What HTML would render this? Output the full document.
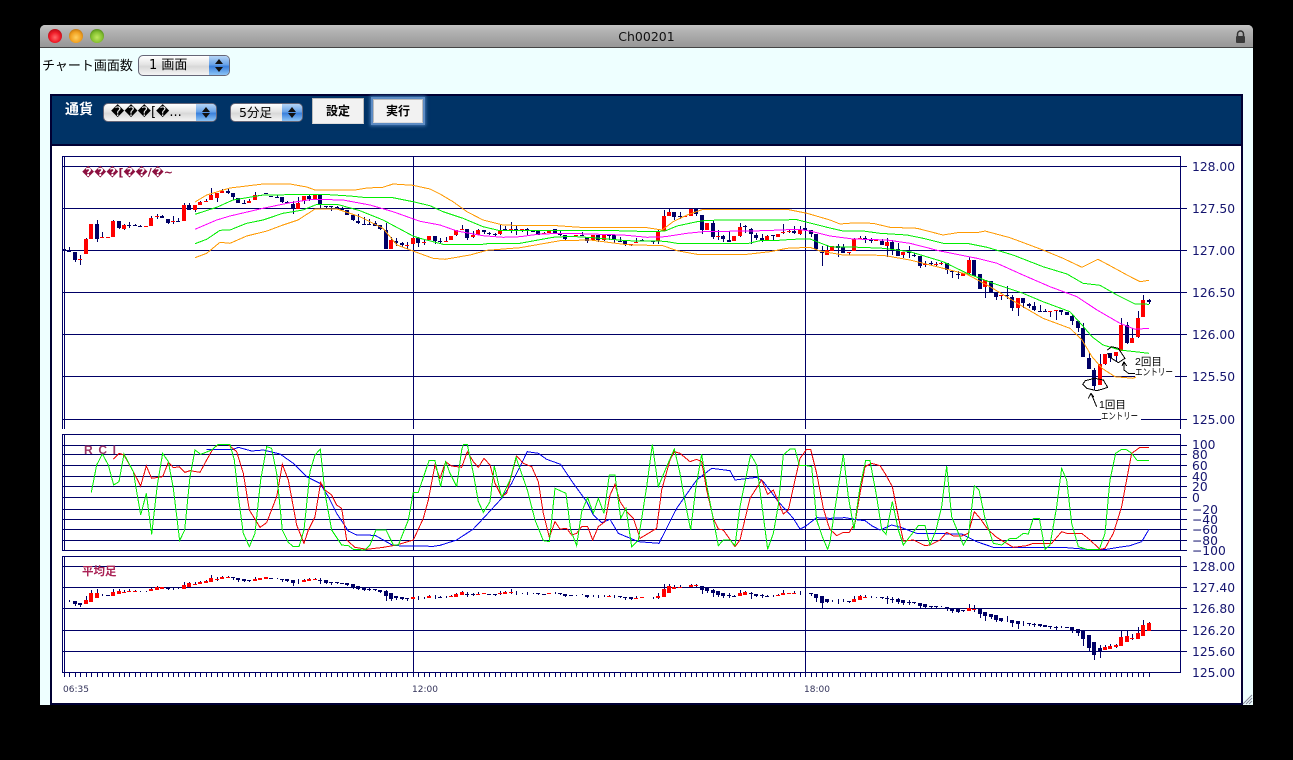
<!DOCTYPE html>
<html><head><meta charset="utf-8"><title>Ch00201</title>
<style>
html,body{margin:0;padding:0;background:#000;width:1293px;height:760px;overflow:hidden}
#win{position:absolute;left:40px;top:25px;width:1213px;height:680px;background:#eeffff;border-radius:5px 5px 0 0;overflow:hidden}
#bar{position:absolute;left:0;top:0;width:1213px;height:22px;background:linear-gradient(#c4c4c4,#b4b4b4 25%,#9c9c9c 85%,#989898);border-bottom:1px solid #444}
#ttl{position:absolute;left:0;top:4px;width:1213px;text-align:center;font:12.5px "DejaVu Sans",sans-serif;color:#111}
.tl{position:absolute;top:4px;width:14px;height:14px;border-radius:50%;border:0}
.lab{position:absolute;font-family:"Liberation Sans","Noto Sans CJK JP",sans-serif;white-space:nowrap}
.sel{position:absolute;box-sizing:border-box;border:1px solid #667;border-radius:5px;background:linear-gradient(#fff,#e4e4e4 45%,#d8d8d8 55%,#f4f4f4);overflow:hidden}
.sel span.t{position:absolute;top:1px;font:13px/18px "DejaVu Sans","Noto Sans CJK JP",sans-serif;color:#000;white-space:nowrap}
.sel i{position:absolute;right:0;top:0;bottom:0;width:20px;background:linear-gradient(#b4d4f6,#6aa4e8 45%,#3a80dc 55%,#8cc4f6)}
.sel i:before,.sel i:after{content:"";position:absolute;left:6px;border-left:4px solid transparent;border-right:4px solid transparent}
.sel i:before{top:3px;border-bottom:5px solid #111}
.sel i:after{bottom:3px;border-top:5px solid #111}
#panel{position:absolute;left:50px;top:94px;width:1193px;height:611px;background:#000033}
#head{position:absolute;left:2px;top:2px;width:1189px;height:48px;background:#003366}
#white{position:absolute;left:2px;top:52px;width:1189px;height:557px;background:#fff}
.btn{position:absolute;box-sizing:border-box;background:#f2f2f2;border:1px solid #bbb;border-bottom-color:#ddd;text-align:center;font:bold 12px "Liberation Sans","Noto Sans CJK JP",sans-serif;color:#000}
svg{position:absolute;left:0;top:0}
</style></head>
<body>
<div id="win">
 <div id="bar">
  <div class="tl" style="left:8px;background:radial-gradient(circle at 50% 60%,#ff6a6a,#f01c28 45%,#b00c16 80%,#6a1018)"></div>
  <div class="tl" style="left:29px;background:radial-gradient(circle at 50% 60%,#ffd060,#f0a020 50%,#b87010 82%,#7a5a20)"></div>
  <div class="tl" style="left:50px;background:radial-gradient(circle at 50% 60%,#c0e860,#84c030 50%,#4c8418 82%,#4a6a28)"></div>
  <div id="ttl">Ch00201</div>
  <svg width="14" height="14" style="left:1194px;top:5px"><path d="M3.5 6V4a3 3 0 0 1 6 0v2" fill="none" stroke="#333" stroke-width="1.5"/><rect x="2" y="6" width="9" height="7" rx="1" fill="#3a3a3a"/></svg>
 </div>
</div>
<div class="lab" style="left:42px;top:57px;font-size:13px;line-height:18px;color:#000">チャート画面数</div>
<div class="sel" style="left:138px;top:55px;width:92px;height:21px"><span class="t" style="left:10px">1 画面</span><i></i></div>
<div id="panel"><div id="head"></div><div id="white"></div></div>
<div class="lab" style="left:65px;top:100px;font-size:14px;font-weight:bold;line-height:18px;color:#fff">通貨</div>
<div class="sel" style="left:103px;top:103px;width:114px;height:19px"><span class="t" style="left:7px;top:0">���[�...</span><i></i></div>
<div class="sel" style="left:230px;top:103px;width:73px;height:19px"><span class="t" style="left:8px;top:0;font-size:12.5px">5分足</span><i></i></div>
<div class="btn" style="left:312px;top:98px;width:52px;height:26px;line-height:25px">設定</div>
<div class="btn" style="left:373px;top:99px;width:50px;height:24px;line-height:23px;box-shadow:0 0 0 2px #5d8cc4,0 0 3px 3px #3f73ad">実行</div>

<svg width="1293" height="760" xmlns="http://www.w3.org/2000/svg">
 <g shape-rendering="crispEdges" fill="none" stroke="#000066" stroke-width="1">
  <path d="M62 156.5H1181M62 166.5H1187M62 208.5H1187M62 250.5H1187M62 292.5H1187M62 334.5H1187M62 376.5H1135M1175 376.5H1187M62 419.5H1101M1141 419.5H1187"/>
  <path d="M62.5 156V429M64.5 156V429M413.5 156V429M805.5 156V429M1180.5 156V429"/>
  <path d="M62 434.5H1181M62 445.5H1187M62 454.5H1187M62 465.5H1187M62 476.5H1187M62 486.5H1187M62 497.5H1187M62 509.5H1187M62 519.5H1187M62 529.5H1187M62 540.5H1187M62 550.5H1187"/>
  <path d="M62.5 434V551M64.5 434V551M413.5 434V551M805.5 434V551M1180.5 434V551"/>
  <path d="M62 556.5H1181M62 566.5H1187M62 587.5H1187M62 608.5H1187M62 630.5H1187M62 651.5H1187M62 672.5H1181"/>
  <path d="M62.5 556V673M64.5 556V673M413.5 556V673M805.5 556V673M1180.5 556V673"/>
 </g>
 <g id="ticks" shape-rendering="crispEdges"></g>
 <g id="c1" shape-rendering="crispEdges"></g>
 <g id="c3" shape-rendering="crispEdges"></g>
 <g fill="none" stroke-width="1" shape-rendering="crispEdges">
  <polyline stroke="#ff9900" points="195,202 206.7,195 230,188 263,184 290,184 306.7,187 315,190 355,190 367,188 383,187.3 393,184 413,185.3 430,189 440,194 453,201.7 467,211.7 483,220 503,225 527,225.7 557,225.7 580,227.3 647,227.7 662,230 673,221.7 687,215 703,209.3 787,209.3 807,213.3 830,220 840,224 853,223 873,223.3 890,227.3 917,228.3 943,235 960,232.3 977,232.7 985,231 1010,237.7 1043,250 1063,258.3 1082,267.3 1098,259.3 1110,265.7 1127,275 1140,281.7 1149,280.3"/>
  <polyline stroke="#00ee00" points="195,214.3 216.7,207.3 233,200 263,195 323,194.3 350,196 367,197.7 393,197.7 413,201.7 430,205.7 443,211.7 463,218.3 483,226.7 500,230.7 603,230.3 653,231.7 665,231 677,226 697,221.7 707,220.3 753,220 797,219.7 810,223 827,227.3 843,231 863,231 880,233.3 907,235 923,238.3 943,243.3 967,243.3 987,247.3 1013,255 1043,266.7 1067,274 1083,283.3 1100,285.3 1117,295 1135,304 1149,304.3"/>
  <polyline stroke="#ff00ff" points="195,229.3 216.7,220 230,216 263,208.3 290,202.7 313,199.3 343,200 370,205 393,211.7 420,221.3 440,225 457,231 483,235.7 503,237.3 520,236.7 540,234 567,233.3 623,235 647,237.3 665,236.7 687,233.3 703,231.7 763,230.7 797,229.3 810,231 830,236 853,239 887,240 910,243.3 940,251 977,258.3 997,263.3 1023,275 1050,286.7 1077,296.7 1097,310 1120,323.3 1135,329.3 1149,328.3"/>
  <polyline stroke="#00ee00" points="195,243.7 206.7,239.3 220,230.3 230,230 246.7,223.3 263,220 283,213.3 303,210 317,204.3 337,204.3 360,210.7 383,220 413,236 420,238.3 443,244.3 480,244.7 490,243.3 520,243.3 553,237.3 570,236.3 593,237.7 627,240.7 665,241.3 677,243.3 747,243.7 760,240.7 773,240.7 793,239.3 810,239 830,246.7 860,247.3 883,248.3 910,251.7 943,261.7 967,273.3 993,283.3 1023,293.3 1043,301.7 1070,311.7 1082,325 1092,336.7 1103,345 1120,350 1149,353.3"/>
  <polyline stroke="#ff9900" points="195,257.7 206.7,253.3 220,242.3 230,243.3 246.7,236 267,231 283,225 298,220 315,209 337,209 360,216.7 383,228.3 397,245 413,251 433,258.3 445,259.3 470,255 487,250.3 520,247.7 560,240.7 590,240 627,244.7 663,245.7 677,250.7 697,254.3 747,254.3 770,251.7 787,248.3 810,247.3 820,251 843,255 883,255.3 910,260 943,268.3 967,274.3 990,286.7 1023,306.7 1043,318.3 1070,328.3 1082,340 1092,356.7 1102,368.3 1115,376.7 1133,378.3 1136,377"/>
 </g>

 <!-- RCI: blue, red, green -->
 <g fill="none" stroke-width="3" shape-rendering="crispEdges">
  <g stroke="#0000ee">
   <polyline transform="translate(50 430) scale(.33333)" points="470,58 550,58 565,52 605,63 640,60 690,72 730,100 770,140 810,160 835,200 860,250 895,303 920,315 975,316 1030,347 1150,349 1170,346"/>
   <polyline transform="translate(440 430) scale(.33333)" points="0,346 50,330 100,297 130,265 185,205 215,160 262,65 295,70 320,88 362,103 400,160 440,215 460,255 485,278 510,268 535,310 595,335 657,340 710,235 770,150 815,115 870,122 885,150 950,142 970,155 1015,215 1060,265 1080,297 1095,290 1130,263 1170,265"/>
   <polyline transform="translate(830 430) scale(.33333)" points="0,265 45,263 85,270 105,272 125,287 150,300 185,285 215,293 260,310 395,312 440,335 490,352 710,353 770,358 830,358 865,352 900,347 935,335 957,298"/>
  </g>
  <g stroke="#ee0000">
   <polyline transform="translate(50 430) scale(.33333)" points="190,87 207,70 222,75 250,125 272,168 289,108 305,145 338,140 355,97 370,113 388,110 405,127 420,122 450,127 470,90 490,55 505,44 535,44 560,65 580,130 598,240 630,292 650,278 680,200 697,103 715,150 740,285 762,340 775,300 795,260 812,157 825,180 845,195 860,225 875,235 890,330 915,352 950,358 1000,352 1040,345 1090,330 1120,265 1135,210 1155,105 1170,145 1187,95 1200,105 1205,108"/>
   <polyline transform="translate(440 430) scale(.33333)" points="35,108 65,112 82,65 100,95 115,112 132,85 150,105 165,160 185,200 200,190 230,78 250,100 275,110 295,155 310,250 328,322 345,275 360,297 380,295 395,315 410,310 425,290 443,290 458,330 475,290 495,275 510,195 525,163 540,215 560,245 580,265 600,325 650,295 665,180 690,90 703,65 720,70 750,95 770,88 785,95 800,180 820,265 835,297 850,300 885,350 900,330 930,205 965,150 983,193 1000,180 1030,252 1045,240 1065,150 1080,85 1100,58 1112,58 1130,130 1150,235 1165,285 1170,298"/>
   <polyline transform="translate(830 430) scale(.33333)" points="0,298 20,317 40,307 58,307 75,280 90,190 105,110 125,100 150,107 165,130 187,170 205,260 220,333 250,330 285,347 300,345 330,330 350,307 370,318 395,318 415,310 433,245 450,265 475,300 500,322 550,352 590,347 610,340 640,340 665,340 695,305 710,310 755,310 780,330 810,358 825,355 850,310 875,230 887,165 905,70 930,52 957,52"/>
  </g>
  <g stroke="#00ee00">
   <polyline transform="translate(50 430) scale(.33333)" points="124,187 140,105 157,72 175,105 191,165 207,155 222,72 250,125 272,255 289,190 305,313 322,165 338,70 355,95 370,175 389,332 404,300 420,140 435,60 452,73 485,60 503,44 540,44 553,90 565,200 580,310 598,350 615,310 632,150 650,50 665,55 680,130 697,300 715,337 730,350 747,350 762,300 780,125 795,75 811,57 825,190 845,300 875,345 895,347 910,358 945,360 960,345 978,300 1008,300 1030,345 1045,345 1075,270 1090,187 1105,187 1137,92 1155,92 1172,170 1187,95 1200,130 1220,170"/>
   <polyline transform="translate(440 430) scale(.33333)" points="50,170 65,60 70,44 82,44 100,130 115,215 130,247 150,215 163,108 185,203 210,150 228,82 262,180 285,270 310,332 328,335 345,175 378,190 392,300 410,347 425,245 443,203 460,250 475,205 492,250 508,135 525,135 542,265 558,235 575,350 595,330 620,170 637,44 655,170 680,110 703,57 720,130 735,215 752,300 768,170 785,73 802,175 835,347 850,330 870,330 885,347 900,230 932,73 950,105 983,358 1000,310 1015,225 1030,75 1050,57 1065,57 1078,107 1100,107 1115,110 1130,270 1147,320 1163,358 1170,335"/>
   <polyline transform="translate(830 430) scale(.33333)" points="0,335 25,170 40,73 55,200 72,298 90,170 107,92 120,92 140,200 155,298 168,313 187,215 205,300 220,345 265,287 285,287 300,345 318,300 335,230 350,108 365,260 400,345 415,320 433,167 447,180 465,265 490,340 515,345 540,325 560,325 580,310 595,312 610,265 628,265 645,358 660,345 680,230 695,115 710,150 725,280 745,350 770,358 808,358 825,310 840,150 857,70 875,58 888,58 905,70 922,92 957,92"/>
  </g>
 </g>

 <!-- hand annotations -->
 <g transform="translate(810 150) scale(.33333)" fill="none" stroke="#000" stroke-width="3" shape-rendering="crispEdges">
  <path d="M818 703L826 692L855 685L880 690L893 712L875 718L860 722L830 715Z"/>
  <path d="M892 600L905 590L925 595L935 610L945 625L925 638L905 625L892 610"/>
  <path d="M843 730L860 770M843 730L835 745M843 730L852 742"/>
  <path d="M942 635L942 660L955 670L975 670M942 635L936 648M942 635L950 648"/>
 </g>
 <g font-family="'Liberation Sans','Noto Sans CJK JP',sans-serif" fill="#000">
  <text x="1135" y="365" font-size="10.5">2回目</text>
  <text x="1135" y="375.5" font-size="9.5" textLength="38" lengthAdjust="spacingAndGlyphs">エントリー</text>
  <text x="1099" y="408" font-size="10.5">1回目</text>
  <text x="1101" y="419.5" font-size="9.5" textLength="37" lengthAdjust="spacingAndGlyphs">エントリー</text>
 </g>

 <!-- labels -->
 <g font-family="'DejaVu Sans',sans-serif" font-size="12.3" fill="#14146e">
  <text x="1192" y="171">128.00</text><text x="1192" y="213">127.50</text><text x="1192" y="255">127.00</text><text x="1192" y="297">126.50</text><text x="1192" y="339">126.00</text><text x="1192" y="381">125.50</text><text x="1192" y="424">125.00</text>
  <text x="1192" y="571">128.00</text><text x="1192" y="592">127.40</text><text x="1192" y="613">126.80</text><text x="1192" y="635">126.20</text><text x="1192" y="656">125.60</text><text x="1192" y="677">125.00</text>
  <text x="1192" y="449">100</text><text x="1192" y="459">80</text><text x="1192" y="470">60</text><text x="1192" y="481">40</text><text x="1192" y="491">20</text><text x="1192" y="502">0</text><text x="1192" y="514">−20</text><text x="1192" y="524">−40</text><text x="1192" y="534">−60</text><text x="1192" y="545">−80</text><text x="1192" y="555">−100</text>
 </g>
 <g font-family="'DejaVu Sans',sans-serif" font-size="9" fill="#33335a">
  <text x="63" y="692">06:35</text><text x="412" y="692">12:00</text><text x="804" y="692">18:00</text>
 </g>
 <text x="82" y="176" font-family="'DejaVu Sans',sans-serif" font-size="11" font-weight="bold" fill="#8c1040" textLength="91">���[��/�~</text>
 <text x="84" y="454" font-family="'Liberation Sans',sans-serif" font-size="12" font-weight="bold" fill="#993366" textLength="32">R C I</text>
 <text x="82" y="575" font-family="'Liberation Sans','Noto Sans CJK JP',sans-serif" font-size="11.5" font-weight="bold" fill="#aa2255">平均足</text>

 <!-- resize grip -->
 <path d="M1243 704L1252 695M1246 704L1252 698M1249 704L1252 701" stroke="#889" fill="none"/>
</svg>
</div>
<script>
var D="n297,301 n301,305,292 n306,330,,335 r327,329,316,345 r267,312,264 r222,267 n222,267,210,276 r261,263,246 r261,263 r213,261,210 n213,234,,237 r225,237,222,240 n225,227,216,234 n225,227,222 n228,230,225 r228,230 r204,228,198 r198,201,192,207 n198,204,195 n207,219,,222 r213,215,198,222 n213,215,204 r165,213,159 n165,180,159 r165,180,,186 r156,165,153 r153,156,147 r135,150,114 r129,144,,156 r123,129,117 n122,129,117,132 n129,141,,150 n144,159 n159,161,150 r153,159,147 r135,150,126 n135,138 n129,131 n138,140 n141,143,135 n141,156,,159 n156,160,153 n162,177,153,192 r159,177,141 r138,154,,162 n138,147,135,153 r135,147 n135,162,,177 n168,170,,177 n168,170,,183 n171,175,168,177 n175,180,171 n180,194 n195,210,,213 n213,219,192,222 n222,224,201 n222,224,207 n219,228,213 n225,237,,240 n240,297,219 r270,297,261 n273,279,264,288 n280,284,276,291 r284,286,276,297 r264,282 n264,279,261,291 r276,278,267,285 r258,270 n258,273,,282 n273,275,264,279 r273,275,261 r258,270 r240,255,,258 r237,240,225 n237,264,,270 r254,261,243,264 r240,255,237 n240,246,,252 n249,252,246,255 n252,254,249,261 r240,252,225,255 n238,240,228 r238,240,216,249 n238,240,228,255 r238,240,,246 n238,241,235,255 n243,245 n243,255 r249,252,246 r240,249 n237,249 n250,254,243,258 n255,267,,270 r258,261 r255,258 n255,258,246 n261,273,,279 r255,270 n255,270,,276 r255,270,,273 n255,258,,270 n255,270,,278 n273,276,261 n273,282,,288 r281,283,,288 r276,278,264 n270,271,267,273 x n273,274,,282 r243,273,240,282 r198,243,180 r186,198,176 n186,201,,210 n198,200,186,207 r198,202 r176,198 n176,192,,198 n195,240,,252 r219,240 n219,261,213,267 r258,261,240,270 n258,267,255,276 n270,276,243 r258,273 r231,258,219,261 n229,231,225,249 n237,252,234,282 n255,264,249,270 n264,270,252,276 r258,270,255,273 n256,258,,270 r252,261 r246,248,222,252 r243,245,240,249 n243,249,228,252 r240,252,228,255 n235,241,,255 n241,252,,261 n252,297,,303 n306,308,288,348 r300,315,285 r288,303 n288,294,282,321 n291,309,282 r306,308,,315 r267,303,264 r264,268,258 n264,267,258,279 n270,273,264,279 r270,273 n273,285,267 r276,288,264,321 n276,297,270,315 n297,318,279 r306,315,,324 n306,309,288,324 n315,317,309,321 n318,348,,354 r341,343,333,351 n340,342,333,348 r342,344,336,348 r340,342,336,345 n339,360,,372 n364,366,,384 n371,374,363,387 r369,378 r330,369,321,372 n330,378 n372,417 r391,411,,444 n393,429 n429,441,,450 r436,438,,450 n436,438,408,447 n441,473,435,483 r444,474,,498 n444,459,,474 n462,468,459,474 n468,480,456,483 n482,484,465 n484,486,477 r482,484,,501 r480,482,,510 n480,486,,495 n486,495 n498,513,492,525 n513,534,,546 n534,621,519 n624,657,609 n660,708,654,720 r642,705,612 r612,642,,645 n609,624,,636 r606,618,,636 r525,603,504 n525,579,516,582 r564,579,534 r504,561,483,564 r450,501,435 n450,456,447,462".split(" ");
var NS="http://www.w3.org/2000/svg";
function P(g,col,d){var p=document.createElementNS(NS,"path");p.setAttribute("fill",col);p.setAttribute("d",d);g.appendChild(p);}
function R(x,y,w,h){return "M"+x+" "+y+"h"+w+"v"+h+"h-"+w+"z";}
var d1={r:"",n:""},w1={r:"",n:""},d3={r:"",n:""},w3={r:"",n:""};
var hO=null,hC=null,tk="";
function Y3(y){return 566+(y-166)*(35.33/84.3);}
for(var i=0;i<D.length;i++){
 var s=D[i];if(s=="x")continue;
 var c=s[0],a=s.slice(1).split(",");
 var t=150+(+a[0])/3,b=150+(+a[1])/3,wt=a[2]?150+(+a[2])/3:t,wb=a[3]?150+(+a[3])/3:b;
 var cx=Math.round(64+5.45*i),l=cx-2;
 var ty=Math.round(t),h=Math.max(1,Math.round(b)-ty);
 d1[c]+=R(l,ty,4,h);
 w1[c]+=R(l+2,Math.round(wt),1,Math.max(1,Math.round(wb)-Math.round(wt)));
 var o=c=="r"?b:t,cl=c=="r"?t:b;
 var nC=(o+cl+wt+wb)/4,nO=hO===null?(o+cl)/2:(hO+hC)/2;
 hO=nO;hC=nC;
 var hi=Math.min(wt,nO,nC),lo=Math.max(wb,nO,nC);
 var k=nC<nO?"r":"n";
 var y1=Math.round(Y3(Math.min(nO,nC))),y2=Math.round(Y3(Math.max(nO,nC)));
 if(Math.abs(Y3(nO)-Y3(nC))>=0.45){d3[k]+=R(l,y1,4,Math.max(1,y2-y1));}
 var w1y=Math.round(Y3(hi)),w2y=Math.round(Y3(lo));
 w3[k]+=R(l+2,w1y,1,Math.max(1,w2y-w1y));
}
for(var j=0;j<=199;j++){tk+=R(Math.round(64+5.45*j),672,1,5);}
var g1=document.getElementById("c1"),g3=document.getElementById("c3");
P(g1,"#000066",w1.n+d1.n);P(g1,"#000066",w1.r);P(g1,"#ff0000",d1.r);
P(g3,"#000066",w3.n+d3.n);P(g3,"#000066",w3.r);P(g3,"#ff0000",d3.r);
P(document.getElementById("ticks"),"#000066",tk);
</script>
</body></html>
